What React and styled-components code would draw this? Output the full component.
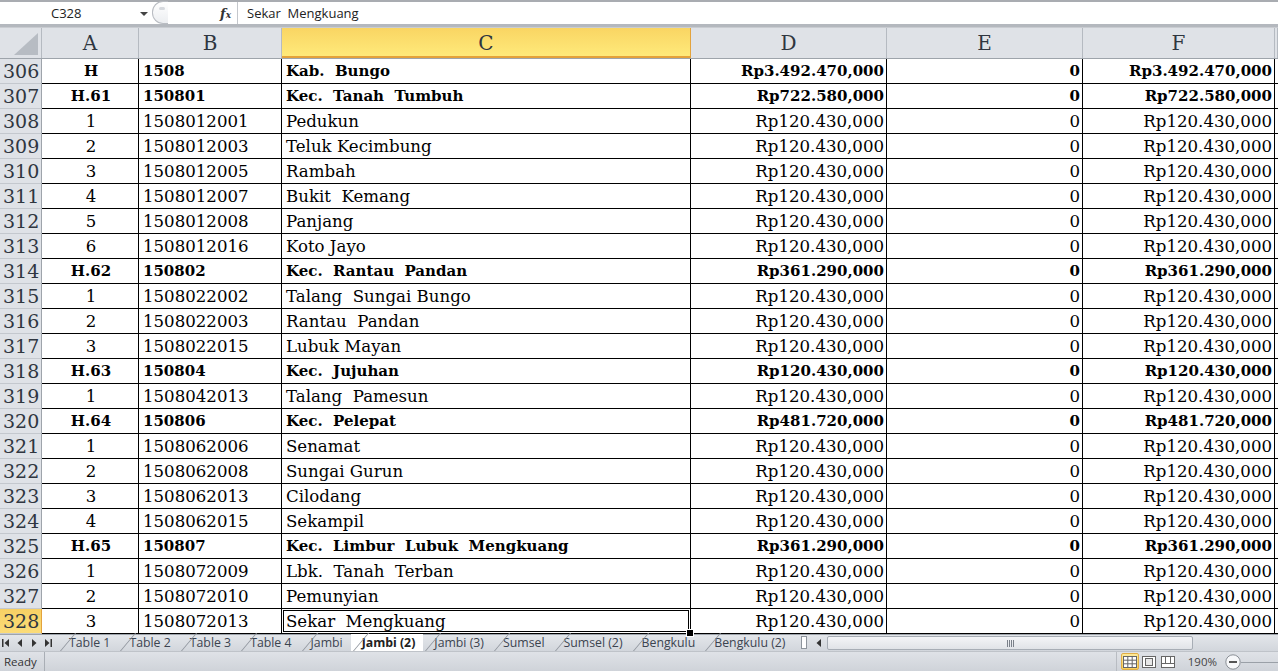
import React from "react";
import styled, { createGlobalStyle } from "styled-components";

const GlobalStyle = createGlobalStyle`
  body {
    margin: 0;
    overflow: hidden;
    background: #fff;
  }
`;

const COLS = "42px 97px 143px 409px 196px 196px 192px 3px";

const rows = [
  { n: 306, a: "H", b: "1508", c: "Kab.  Bungo", d: "Rp3.492.470,000", f: "Rp3.492.470,000", bold: true },
  { n: 307, a: "H.61", b: "150801", c: "Kec.  Tanah  Tumbuh", d: "Rp722.580,000", f: "Rp722.580,000", bold: true },
  { n: 308, a: "1", b: "1508012001", c: "Pedukun" },
  { n: 309, a: "2", b: "1508012003", c: "Teluk Kecimbung" },
  { n: 310, a: "3", b: "1508012005", c: "Rambah" },
  { n: 311, a: "4", b: "1508012007", c: "Bukit  Kemang" },
  { n: 312, a: "5", b: "1508012008", c: "Panjang" },
  { n: 313, a: "6", b: "1508012016", c: "Koto Jayo" },
  { n: 314, a: "H.62", b: "150802", c: "Kec.  Rantau  Pandan", d: "Rp361.290,000", f: "Rp361.290,000", bold: true },
  { n: 315, a: "1", b: "1508022002", c: "Talang  Sungai Bungo" },
  { n: 316, a: "2", b: "1508022003", c: "Rantau  Pandan" },
  { n: 317, a: "3", b: "1508022015", c: "Lubuk Mayan" },
  { n: 318, a: "H.63", b: "150804", c: "Kec.  Jujuhan", d: "Rp120.430,000", f: "Rp120.430,000", bold: true },
  { n: 319, a: "1", b: "1508042013", c: "Talang  Pamesun" },
  { n: 320, a: "H.64", b: "150806", c: "Kec.  Pelepat", d: "Rp481.720,000", f: "Rp481.720,000", bold: true },
  { n: 321, a: "1", b: "1508062006", c: "Senamat" },
  { n: 322, a: "2", b: "1508062008", c: "Sungai Gurun" },
  { n: 323, a: "3", b: "1508062013", c: "Cilodang" },
  { n: 324, a: "4", b: "1508062015", c: "Sekampil" },
  { n: 325, a: "H.65", b: "150807", c: "Kec.  Limbur  Lubuk  Mengkuang", d: "Rp361.290,000", f: "Rp361.290,000", bold: true },
  { n: 326, a: "1", b: "1508072009", c: "Lbk.  Tanah  Terban" },
  { n: 327, a: "2", b: "1508072010", c: "Pemunyian" },
  { n: 328, a: "3", b: "1508072013", c: "Sekar  Mengkuang", active: true },
];

const tabs = ["Table 1", "Table 2", "Table 3", "Table 4", "Jambi", "Jambi (2)", "Jambi (3)", "Sumsel", "Sumsel (2)", "Bengkulu", "Bengkulu (2)"];

const App = () => {
  return (
    <>
      <GlobalStyle />
      <Window>
        <FormulaBar>
          <NameBox>
            <span>C328</span>
            <DropArrow />
          </NameBox>
          <Splitter />
          <Fx>
            f<small>x</small>
          </Fx>
          <FormulaInput>Sekar  Mengkuang</FormulaInput>
        </FormulaBar>

        <Sheet>
          <HeaderRow>
            <Corner>
              <CornerTri />
            </Corner>
            <ColHead>A</ColHead>
            <ColHead>B</ColHead>
            <ColHead selected>C</ColHead>
            <ColHead>D</ColHead>
            <ColHead>E</ColHead>
            <ColHead>F</ColHead>
            <ColHead />
          </HeaderRow>
          {rows.map((r) => (
            <Row key={r.n} bold={r.bold}>
              <RowHead selected={r.active}>{r.n}</RowHead>
              <Cell align="center">{r.a}</Cell>
              <Cell>{r.b}</Cell>
              <Cell active={r.active}>
                {r.c}
                {r.active && <FillHandle />}
              </Cell>
              <Cell align="right">{r.d || "Rp120.430,000"}</Cell>
              <Cell align="right">0</Cell>
              <Cell align="right">{r.f || "Rp120.430,000"}</Cell>
              <Cell />
            </Row>
          ))}
        </Sheet>

        <TabBar>
          <TabNav>
            <NavBtn>
              <svg width="8" height="8" viewBox="0 0 8 8">
                <rect x="0" y="0" width="1.5" height="8" fill="#333" />
                <path d="M7 0 L2.5 4 L7 8 Z" fill="#333" />
              </svg>
            </NavBtn>
            <NavBtn>
              <svg width="6" height="8" viewBox="0 0 6 8">
                <path d="M5 0 L0.5 4 L5 8 Z" fill="#333" />
              </svg>
            </NavBtn>
            <NavBtn>
              <svg width="6" height="8" viewBox="0 0 6 8">
                <path d="M1 0 L5.5 4 L1 8 Z" fill="#333" />
              </svg>
            </NavBtn>
            <NavBtn>
              <svg width="8" height="8" viewBox="0 0 8 8">
                <path d="M1 0 L5.5 4 L1 8 Z" fill="#333" />
                <rect x="6.5" y="0" width="1.5" height="8" fill="#333" />
              </svg>
            </NavBtn>
          </TabNav>
          <Tabs>
            {tabs.map((t) => (
              <Tab key={t} active={t === "Jambi (2)"}>
                {t}
              </Tab>
            ))}
          </Tabs>
          <TabSplit />
          <ScrollLeft>
            <svg width="6" height="8" viewBox="0 0 6 8">
              <path d="M5 0 L0.5 4 L5 8 Z" fill="#333" />
            </svg>
          </ScrollLeft>
          <ScrollTrack>
            <ScrollThumb>
              <Grip />
            </ScrollThumb>
          </ScrollTrack>
        </TabBar>

        <StatusBar>
          <Ready>Ready</Ready>
          <StatusRight>
            <ViewBtn active>
              <svg width="14" height="12" viewBox="0 0 14 12">
                <rect x="0.5" y="0.5" width="13" height="11" fill="#fff" stroke="#666" />
                <path d="M0.5 4.2 H13.5 M0.5 7.8 H13.5 M4.8 0.5 V11.5 M9.2 0.5 V11.5" stroke="#666" />
              </svg>
            </ViewBtn>
            <ViewBtn>
              <svg width="14" height="12" viewBox="0 0 14 12">
                <rect x="0.5" y="0.5" width="13" height="11" fill="#fff" stroke="#666" />
                <rect x="3.5" y="2.5" width="7" height="7" fill="#e8e8e8" stroke="#666" />
              </svg>
            </ViewBtn>
            <ViewBtn>
              <svg width="14" height="12" viewBox="0 0 14 12">
                <rect x="0.5" y="0.5" width="13" height="11" fill="#fff" stroke="#666" />
                <path d="M4.5 0.5 V7.5 M9.5 0.5 V7.5 M0.5 7.5 H13.5" stroke="#666" />
              </svg>
            </ViewBtn>
            <Zoom>190%</Zoom>
            <ZoomMinus>
              <svg width="16" height="16" viewBox="0 0 16 16">
                <circle cx="8" cy="8" r="7.2" fill="#f7f8fa" stroke="#8a8f96" />
                <rect x="4" y="7" width="8" height="2" fill="#555" />
              </svg>
            </ZoomMinus>
            <ZoomLine />
          </StatusRight>
        </StatusBar>
      </Window>
    </>
  );
};

const Window = styled.div`
  width: 1278px;
  height: 671px;
  display: flex;
  flex-direction: column;
  background: #fff;
  overflow: hidden;
`;

const FormulaBar = styled.div`
  height: 27px;
  display: flex;
  align-items: stretch;
  border-top: 2px solid #a9acb1;
  border-bottom: 3px solid #b4b8be;
  box-sizing: border-box;
  background: #fff;
  font-family: "Open Sans", "DejaVu Sans", sans-serif;
  font-size: 13px;
  color: #222;
  flex-shrink: 0;
`;

const NameBox = styled.div`
  width: 152px;
  display: flex;
  align-items: center;
  position: relative;
  span {
    margin-left: 51px;
  }
`;

const DropArrow = styled.div`
  position: absolute;
  right: 4px;
  top: 10px;
  width: 0;
  height: 0;
  border-left: 4px solid transparent;
  border-right: 4px solid transparent;
  border-top: 4px solid #444;
`;

const Splitter = styled.div`
  width: 16px;
  height: 23px;
  border-radius: 11px 0 0 11px;
  border: 1px solid #b9bcc2;
  border-right: none;
  background: linear-gradient(#ffffff, #eceef1);
  box-sizing: border-box;
  position: relative;
  margin-top: -1px;
  &::after {
    content: "";
    position: absolute;
    left: 6px;
    top: 5px;
    width: 6px;
    height: 3px;
    border-radius: 2px;
    background: #d6d9de;
  }
`;

const Fx = styled.div`
  width: 70px;
  display: flex;
  align-items: center;
  justify-content: flex-end;
  padding-right: 6px;
  box-sizing: border-box;
  font-family: "DejaVu Serif", serif;
  font-style: italic;
  font-weight: bold;
  font-size: 13px;
  color: #333;
  border-right: 1px solid #c4c7cc;
  small {
    font-size: 9px;
    margin-top: 4px;
  }
`;

const FormulaInput = styled.div`
  flex: 1;
  display: flex;
  align-items: center;
  padding-left: 9px;
  white-space: pre;
`;

const Sheet = styled.div`
  display: flex;
  flex-direction: column;
  font-family: "DejaVu Serif", serif;
  flex-shrink: 0;
`;

const HeaderRow = styled.div`
  display: grid;
  grid-template-columns: ${COLS};
  height: 32px;
  box-sizing: border-box;
  border-top: 1px solid #c9ccd1;
  border-bottom: 1px solid #9ea4ab;
  background: #dfe2e7;
`;

const Corner = styled.div`
  position: relative;
  border-right: 1px solid #b5bac1;
`;

const CornerTri = styled.div`
  position: absolute;
  right: 3px;
  bottom: 3px;
  width: 0;
  height: 0;
  border-left: 24px solid transparent;
  border-bottom: 22px solid #b7bcc3;
`;

const ColHead = styled.div`
  display: flex;
  align-items: center;
  justify-content: center;
  font-size: 20px;
  color: #2f3640;
  border-right: 1px solid #b5bac1;
  background: ${({ selected }) =>
    selected ? "linear-gradient(#f9d563, #ffeb7c)" : "transparent"};
  box-shadow: ${({ selected }) => (selected ? "inset 0 -2px 0 #e4a23a" : "none")};
  ${({ selected }) => selected && "border-right-color: #e3a33d;"}
`;

const Row = styled.div`
  display: grid;
  grid-template-columns: ${COLS};
  height: 25px;
  font-size: ${({ bold }) => (bold ? "15px" : "16.6px")};
  font-weight: ${({ bold }) => (bold ? 700 : 400)};
  color: #000;
`;

const RowHead = styled.div`
  display: flex;
  align-items: center;
  padding-left: 3px;
  font-weight: 400;
  font-size: 19px;
  color: #2f3640;
  background: ${({ selected }) => (selected ? "linear-gradient(#f7d064, #fbdc78)" : "#dfe2e7")};
  border-right: 1px solid ${({ selected }) => (selected ? "#e3a33d" : "#9ea4ab")};
  border-bottom: 1px solid #c4c8ce;
  box-sizing: border-box;
  line-height: 1;
`;

const Cell = styled.div`
  display: flex;
  align-items: center;
  justify-content: ${({ align }) =>
    align === "center" ? "center" : align === "right" ? "flex-end" : "flex-start"};
  padding: 0 2px 0 4px;
  border-right: 1px solid #000;
  border-bottom: 1px solid #000;
  box-sizing: border-box;
  white-space: pre;
  overflow: hidden;
  position: relative;
  ${({ active }) =>
    active &&
    `
    overflow: visible;
    box-shadow: inset 0 0 0 1px #fff, inset 0 0 0 2px #000;
    border-left: 1px solid #000;
    margin-left: -1px;
  `}
`;

const FillHandle = styled.span`
  position: absolute;
  right: -4px;
  bottom: -4px;
  width: 6px;
  height: 6px;
  background: #000;
  border: 1px solid #fff;
  z-index: 2;
`;

const TabBar = styled.div`
  height: 17px;
  display: flex;
  align-items: stretch;
  background: linear-gradient(#e3e6ea, #d2d6dc);
  border-top: 1px solid #9ea4ab;
  box-sizing: border-box;
  font-family: "Open Sans", "DejaVu Sans", sans-serif;
  font-size: 12.3px;
  color: #3c4450;
  flex-shrink: 0;
`;

const TabNav = styled.div`
  width: 58px;
  display: flex;
  align-items: center;
  padding-left: 2px;
  gap: 6px;
  box-sizing: border-box;
`;

const NavBtn = styled.div`
  width: 8px;
  display: flex;
  justify-content: center;
`;

const Tabs = styled.div`
  display: flex;
  align-items: stretch;
`;

const Tab = styled.div`
  position: relative;
  display: flex;
  align-items: center;
  padding: 0 8px 0 11px;
  margin-top: -1px;
  white-space: nowrap;
  background: ${({ active }) => (active ? "#fff" : "transparent")};
  font-weight: ${({ active }) => (active ? 700 : 400)};
  color: ${({ active }) => (active ? "#222" : "#3c4450")};
  &::before {
    content: "";
    position: absolute;
    left: 2px;
    top: -1px;
    bottom: 0;
    width: 1px;
    background: #8e949c;
    transform: skewX(-40deg);
    transform-origin: bottom;
  }
`;

const TabSplit = styled.div`
  width: 4px;
  margin: 1px 6px 2px 8px;
  border: 1px solid #8e949c;
  background: #fff;
`;

const ScrollLeft = styled.div`
  width: 12px;
  display: flex;
  align-items: center;
  justify-content: center;
`;

const ScrollTrack = styled.div`
  flex: 1;
  display: flex;
  padding: 1px 0 1px 2px;
`;

const ScrollThumb = styled.div`
  width: 364px;
  border: 1px solid #a7adb5;
  border-radius: 2px;
  background: linear-gradient(#f4f5f7, #e0e3e7);
  display: flex;
  align-items: center;
  justify-content: center;
`;

const Grip = styled.div`
  width: 7px;
  height: 7px;
  background: repeating-linear-gradient(90deg, #7a8089 0 1px, transparent 1px 2px);
`;

const StatusBar = styled.div`
  flex: 1;
  display: flex;
  align-items: center;
  background: linear-gradient(#dfe2e7, #cfd3d9);
  border-top: 1px solid #bfc3c9;
  font-family: "Open Sans", "DejaVu Sans", sans-serif;
  font-size: 11.5px;
  color: #333;
`;

const Ready = styled.div`
  padding: 0 7px 0 4px;
  height: 100%;
  display: flex;
  align-items: center;
  border-right: 1px solid #a9aeb5;
`;

const StatusRight = styled.div`
  margin-left: auto;
  display: flex;
  align-items: center;
  height: 100%;
  border-left: 1px solid #b8bcc2;
  padding-left: 4px;
`;

const ViewBtn = styled.div`
  width: 18px;
  height: 17px;
  display: flex;
  align-items: center;
  justify-content: center;
  margin-right: 1px;
  border-radius: 2px;
  box-sizing: border-box;
  ${({ active }) =>
    active &&
    `
    background: linear-gradient(#fde99a, #f8cf5a);
    border: 1px solid #e1ae45;
  `}
`;

const Zoom = styled.div`
  margin: 0 8px 0 10px;
  color: #444;
`;

const ZoomMinus = styled.div`
  display: flex;
  align-items: center;
`;

const ZoomLine = styled.div`
  width: 37px;
  height: 1px;
  background: #9aa0a7;
  margin-top: 1px;
`;

export default App;
